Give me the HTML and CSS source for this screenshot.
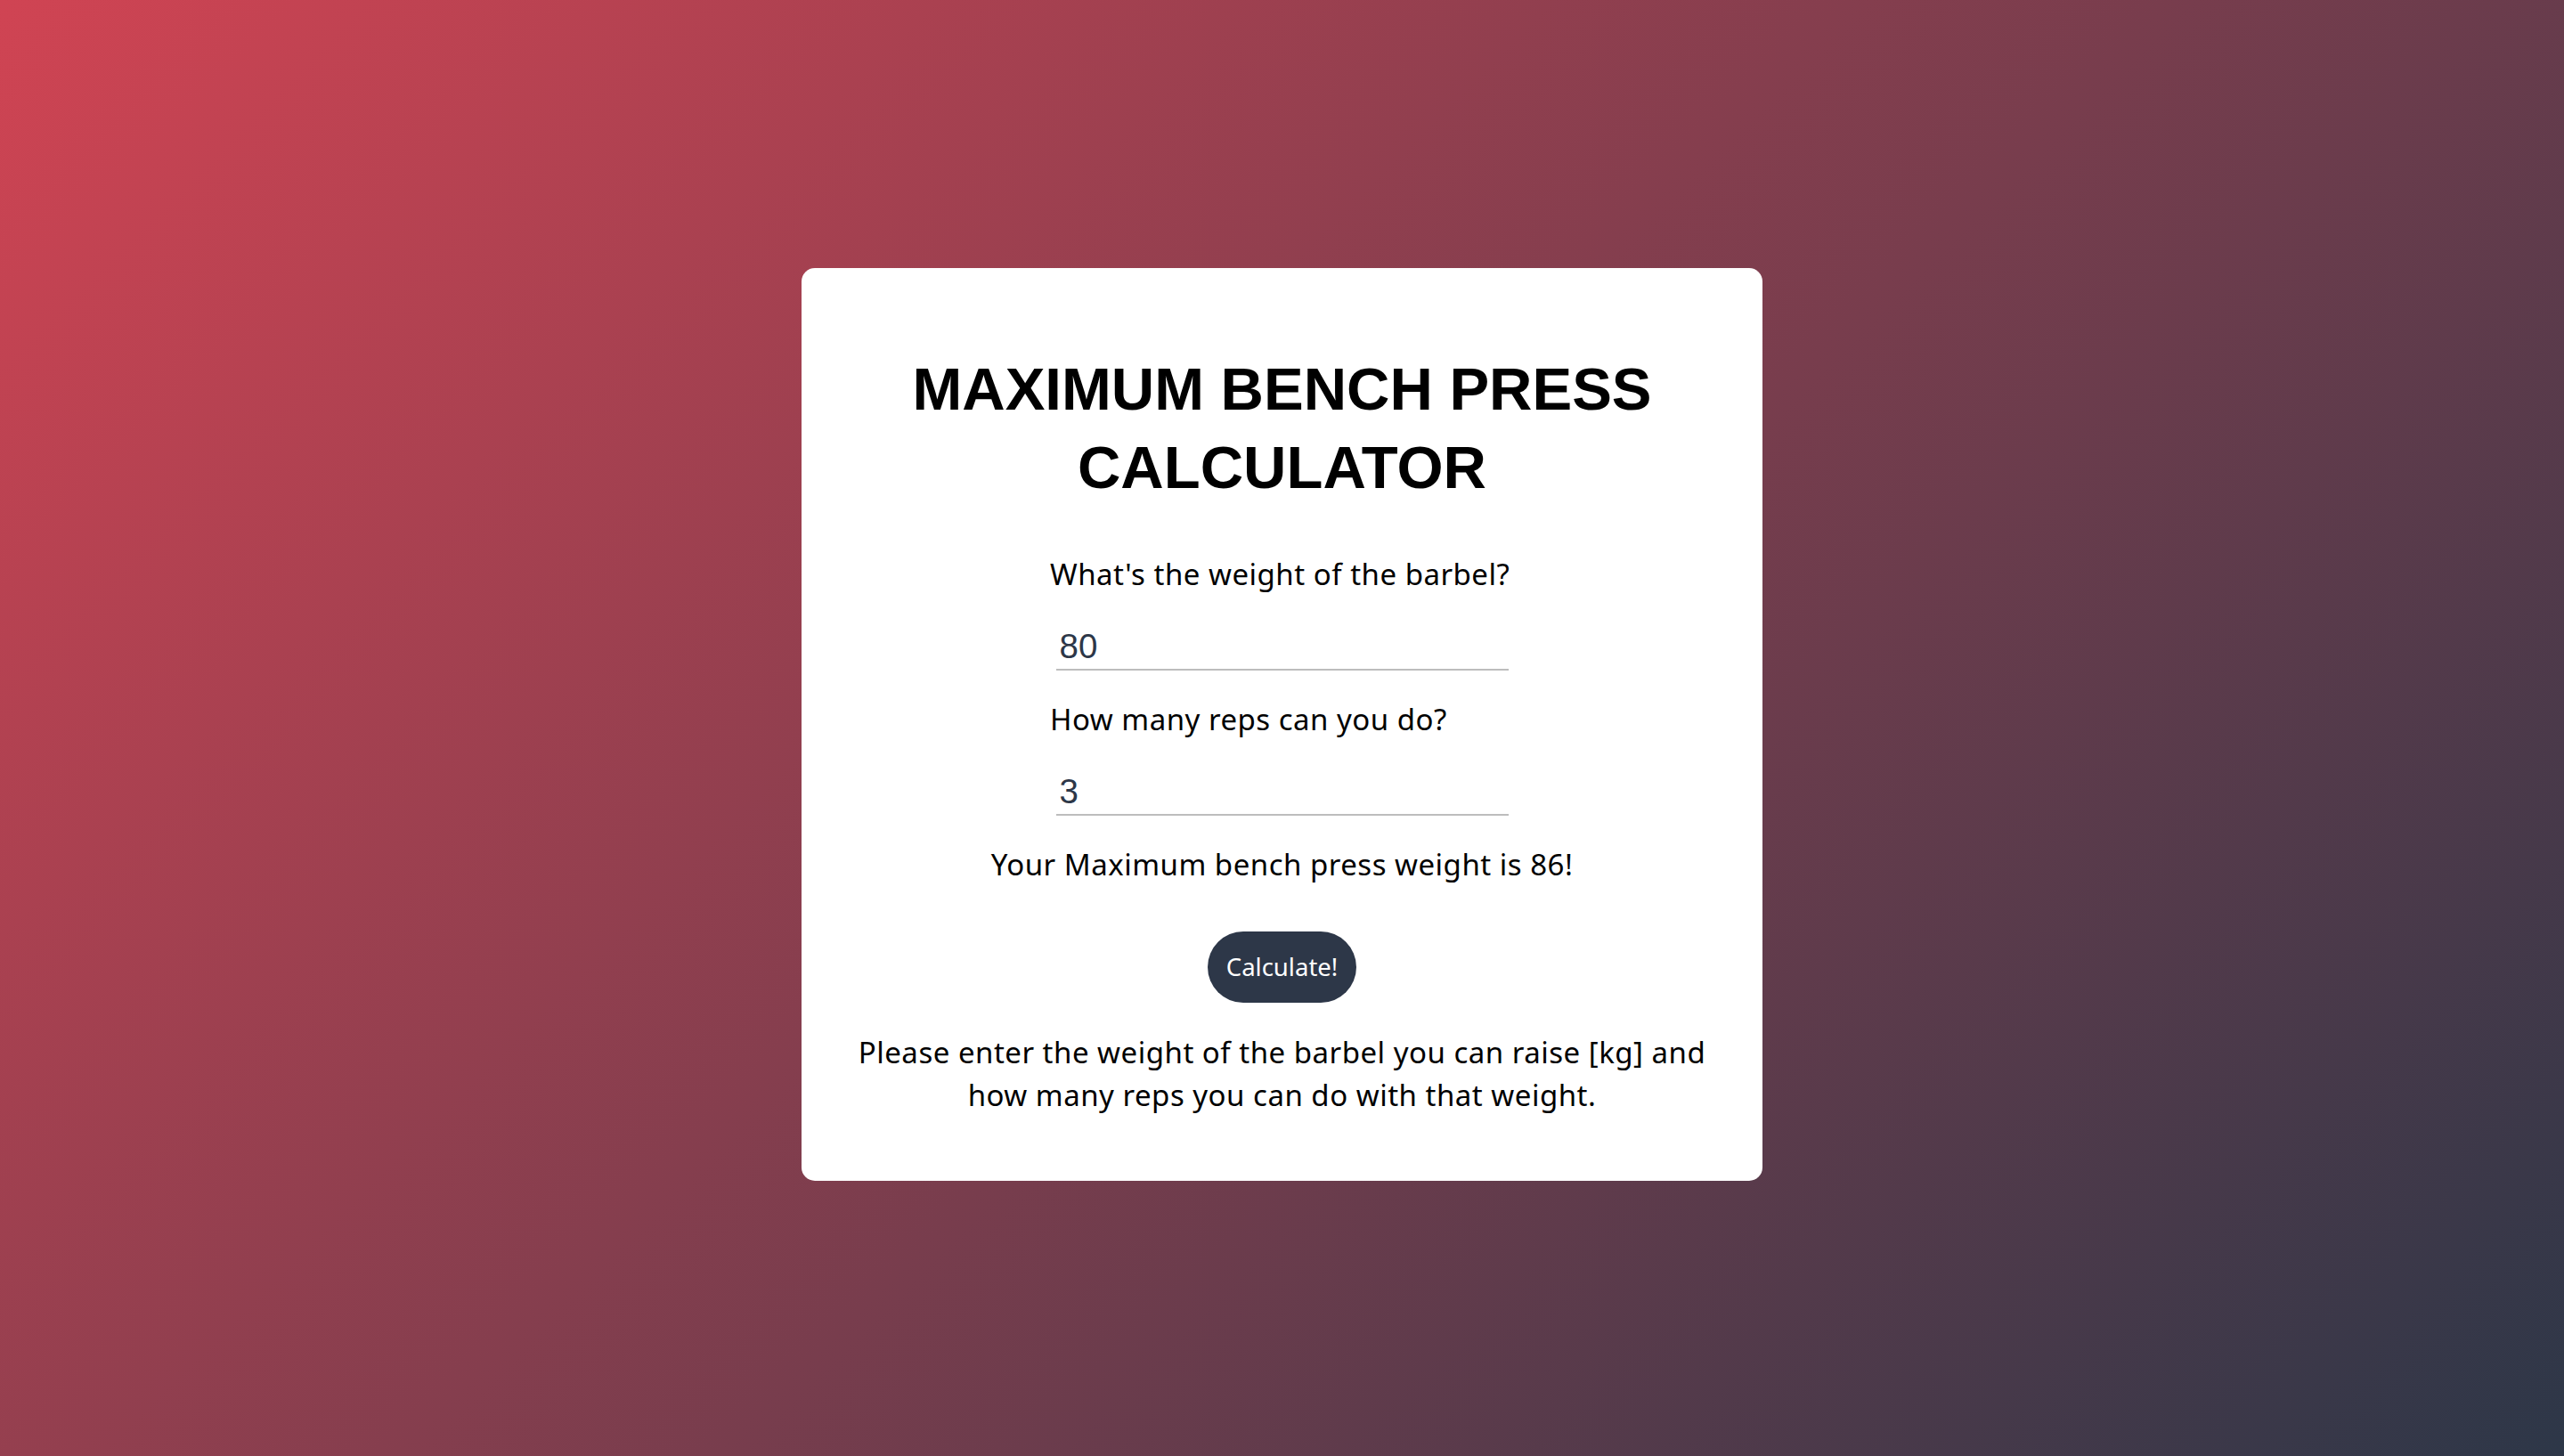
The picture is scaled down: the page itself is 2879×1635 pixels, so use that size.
FILE: index.html
```html
<!DOCTYPE html>
<html lang="en">
<head>
<meta charset="utf-8">
<title>Maximum Bench Press Calculator</title>
<link rel="stylesheet" href="styles.css">
</head>
<body>
<main class="page">
  <section class="card">
    <h1 class="title">MAXIMUM BENCH PRESS CALCULATOR</h1>
    <div class="form">
      <label class="label label-first" for="weight">What's the weight of the barbel?</label>
      <input class="field" id="weight" type="text" value="80">
      <label class="label" for="reps">How many reps can you do?</label>
      <input class="field" id="reps" type="text" value="3">
    </div>
    <p class="result">Your Maximum bench press weight is 86!</p>
    <button class="calc" type="button">Calculate!</button>
    <p class="hint">Please enter the weight of the barbel you can raise [kg] and how many reps you can do with that weight.</p>
  </section>
</main>
</body>
</html>
```
FILE: styles.css
```css
html, body {
  margin: 0;
  padding: 0;
}

body {
  min-height: 100vh;
  background: linear-gradient(135deg, #d04453 0%, #2d3748 100%);
  font-family: "Noto Sans", "Open Sans", sans-serif;
  color: #000;
}

.page {
  min-height: 100vh;
  box-sizing: border-box;
  padding-bottom: 8px;
  display: flex;
  align-items: center;
  justify-content: center;
}

.card {
  width: 1079px;
  box-sizing: border-box;
  background: #fff;
  border-radius: 15px;
  padding: 92px 50px 72.25px;
  display: flex;
  flex-direction: column;
  align-items: center;
  text-align: center;
}

.title {
  margin: 0;
  font-family: "Liberation Sans", Arial, sans-serif;
  font-weight: 700;
  font-size: 67px;
  line-height: 88.6px;
  color: #000;
}

.form {
  width: 521px;
  display: flex;
  flex-direction: column;
  align-items: center;
}

.label {
  align-self: stretch;
  text-align: left;
  white-space: nowrap;
  font-size: 33px;
  line-height: 48px;
  letter-spacing: 0.5px;
  margin-top: 31px;
}

.label-first {
  margin-top: 50.7px;
}

.field {
  display: block;
  width: 508px;
  height: 52px;
  box-sizing: border-box;
  margin-top: 32px;
  padding: 0 0 0 4px;
  border: none;
  border-bottom: 2px solid #bdbdbd;
  background: transparent;
  outline: none;
  font-family: "Liberation Sans", Arial, sans-serif;
  font-size: 38.5px;
  line-height: 50px;
  color: #2d3748;
}

.result {
  margin: 31.4px 0 0;
  font-size: 33px;
  line-height: 48px;
  letter-spacing: 0.5px;
  white-space: nowrap;
}

.calc {
  margin-top: 51.4px;
  height: 80px;
  padding: 0 21px;
  border: none;
  border-radius: 40px;
  background: #2d3748;
  color: #fff;
  font-family: "Noto Sans", "Open Sans", sans-serif;
  font-size: 27.5px;
  line-height: 80px;
  cursor: pointer;
}

.hint {
  margin: 31.45px 0 0;
  font-size: 33px;
  line-height: 48px;
  letter-spacing: 0.5px;
}
```
